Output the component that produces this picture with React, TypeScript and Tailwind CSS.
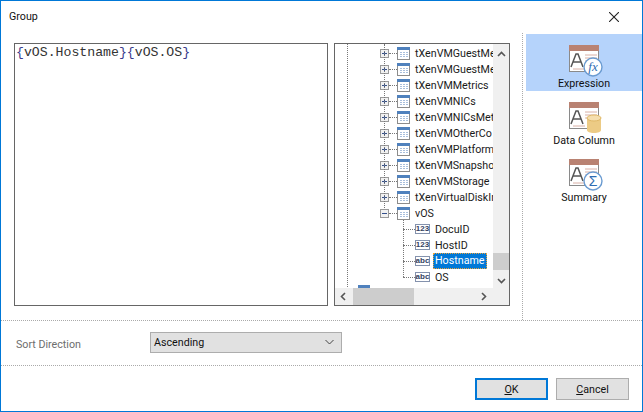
const TABLES = [
  'tXenVMGuestMe',
  'tXenVMGuestMe',
  'tXenVMMetrics',
  'tXenVMNICs',
  'tXenVMNICsMet',
  'tXenVMOtherCo',
  'tXenVMPlatform',
  'tXenVMSnapshot',
  'tXenVMStorage',
  'tXenVirtualDiskIn',
];

const COLUMNS = [
  { name: 'DocuID', kind: '123' },
  { name: 'HostID', kind: '123' },
  { name: 'Hostname', kind: 'abc', selected: true },
  { name: 'OS', kind: 'abc' },
];

function Expander({ open }: { open?: boolean }) {
  return (
    <svg width="9" height="9" viewBox="0 0 9 9" className="shrink-0">
      <rect x="0.5" y="0.5" width="8" height="8" fill="#f1f1f1" stroke="#9a9a9a" />
      <path d="M2 4.5h5" stroke="#33508c" />
      {!open && <path d="M4.5 2v5" stroke="#33508c" />}
    </svg>
  );
}

function TableIcon() {
  return (
    <svg width="13" height="13" viewBox="0 0 13 13" className="shrink-0">
      <rect x="0.5" y="0.5" width="12" height="12" fill="#fff" stroke="#8c8c8c" />
      <rect x="0" y="0" width="13" height="3" fill="#4f81bd" />
      <path d="M3 5h2v1H3zM6 5h2v1H6zM9 5h2v1H9zM3 7h2v1H3zM6 7h2v1H6zM9 7h2v1H9zM3 9h2v1H3zM6 9h2v1H6zM9 9h2v1H9z" fill="#a9bfdc" />
    </svg>
  );
}

function TableRow({ name, open }: { name: string; open?: boolean }) {
  return (
    <div className="flex h-4 items-center pl-[45px]">
      <Expander open={open} />
      <div className="w-[8px] shrink-0 border-t border-dotted border-[#777]" />
      <TableIcon />
      <span className="ml-[5px] pt-[2px] whitespace-nowrap text-[#1a1a1a]">{name}</span>
    </div>
  );
}

function ColumnRow({ name, kind, selected }: { name: string; kind: string; selected?: boolean }) {
  return (
    <div className="flex h-4 items-center pl-[68px]">
      <div className="w-[12px] shrink-0 border-t border-dotted border-[#777]" />
      <span className="flex h-[10px] w-[15px] shrink-0 items-center justify-center border border-[#8492ad] bg-white font-['Liberation_Sans',sans-serif] text-[8px] leading-none font-bold text-[#34425f]">
        {kind}
      </span>
      {selected ? (
        <span className="ml-[3px] flex h-4 items-center border border-dotted border-[#e8a33d] bg-[#0078d7] px-[1px] pt-[1px] text-white">{name}</span>
      ) : (
        <span className="ml-[5px] pt-[2px] text-[#1a1a1a]">{name}</span>
      )}
    </div>
  );
}

function Chevron({ d }: { d: string }) {
  return (
    <svg width="9" height="9" viewBox="0 0 9 9" className="shrink-0">
      <path d={d} fill="none" stroke="#555" strokeWidth="1.6" />
    </svg>
  );
}

function ReportIcon({ children }: { children: React.ReactNode }) {
  return (
    <svg width="34" height="33" viewBox="0 0 34 33" className="shrink-0">
      <rect x="0.5" y="0.5" width="29" height="26" fill="#fff" stroke="#8a8a8a" />
      <rect x="0" y="0" width="30" height="6" fill="#b98272" />
      <path d="M2 22 7 9h2l5 13M4.500 17h7" fill="none" stroke="#555" strokeWidth="1.5" />
      <path d="M16 10h12M16 13h12M16 16h8M4 24h12" stroke="#d8b0a6" />
      {children}
    </svg>
  );
}

function Badge({ children }: { children: React.ReactNode }) {
  return (
    <>
      <circle cx="24" cy="22" r="9" fill="#fff" stroke="#6a9bd1" strokeWidth="1.4" />
      {children}
    </>
  );
}

function PanelItem({ label, active, children }: { label: string; active?: boolean; children: React.ReactNode }) {
  return (
    <div className={`flex h-[57px] flex-col items-center pt-[11px] ${active ? 'bg-[#b5d3fb]' : ''}`}>
      <div className="h-[33px] pl-[4px]">{children}</div>
      <span className="-mt-[1px] leading-[14px] text-[#111]">{label}</span>
    </div>
  );
}

export default function App() {
  return (
    <div className="flex h-[412px] w-[643px] flex-col overflow-hidden border border-[#0078d7] bg-white font-['Roboto',sans-serif] text-[10.7px]">
      {/* Title bar */}
      <div className="flex h-[32px] shrink-0 items-center justify-between pr-[23px] pb-[1px] pl-[8px]">
        <span className="pt-[2px] text-[#111]">Group</span>
        <svg width="10" height="10" viewBox="0 0 10 10">
          <path d="M0 0l10 10M10 0 0 10" stroke="#222" strokeWidth="1.1" />
        </svg>
      </div>

      {/* Main area */}
      <div className="flex h-[288px] shrink-0 border-b border-dotted border-[#aaa]">
        <div className="flex gap-[6px] pt-[10px] pl-[13px]">
          <div className="h-[263px] w-[314px] border border-[#666] px-[1px] py-[2px] font-['Liberation_Mono',monospace] text-[13.2px] leading-[14px] text-[#333]">
            <span className="text-[#3a3a8c]">{'{'}</span>vOS.Hostname<span className="text-[#3a3a8c]">{'}{'}</span>vOS.OS<span className="text-[#3a3a8c]">{'}'}</span>
          </div>

          <div className="relative h-[263px] w-[176px] overflow-hidden border border-[#666]">
            <div className="flex h-[244px]">
              <div className="w-[158px] overflow-hidden pt-[1px]">
                {TABLES.map((t, i) => (
                  <TableRow key={i} name={t} />
                ))}
                <TableRow name="vOS" open />
                {COLUMNS.map((c) => (
                  <ColumnRow key={c.name} {...c} />
                ))}
              </div>
              <div className="flex w-[16px] flex-col items-center bg-[#f0f0f0] pt-[6px]">
                <Chevron d="M1 6l3.500-3.500L8 6" />
                <div className="mt-[194px] h-[17px] w-full bg-[#cdcdcd]" />
                <div className="mt-[6px]">
                  <Chevron d="M1 3l3.500 3.500L8 3" />
                </div>
              </div>
            </div>
            <div className="flex h-[17px] items-center bg-[#f0f0f0] pr-[21px] pl-[4px]">
              <Chevron d="M6 1 2.500 4.500 6 8" />
              <div className="ml-[5px] h-full w-[61px] bg-[#cdcdcd]" />
              <div className="ml-auto">
                <Chevron d="M3 1l3.500 3.500L3 8" />
              </div>
            </div>
            {/* tree guide lines */}
            <div className="absolute top-0 left-[12px] h-[243px] border-l border-dotted border-[#777]" />
            <div className="absolute top-0 left-[49px] h-[164px] border-l border-dotted border-[#777]" />
            <div className="absolute top-[176px] left-[68px] h-[57px] border-l border-dotted border-[#777]" />
            <div className="absolute top-[241px] left-[23px] h-[3px] w-[12px] bg-[#4f81bd]" />
          </div>
        </div>

        {/* Group type picker */}
        <div className="ml-[12px] flex flex-1 flex-col border-l border-dotted border-[#aaa] pt-[1px] pl-[3px]">
          <PanelItem label="Expression" active>
            <ReportIcon>
              <Badge>
                <text x="24" y="26" textAnchor="middle" fontFamily="Liberation Serif, serif" fontStyle="italic" fontSize="13" fill="#2f6db3">fx</text>
              </Badge>
            </ReportIcon>
          </PanelItem>
          <PanelItem label="Data Column">
            <ReportIcon>
              <path d="M18 16v12c0 2 3 3 7 3s7-1 7-3V16z" fill="#eccb85" />
              <ellipse cx="25" cy="16" rx="7" ry="3" fill="#f5deae" stroke="#e0b968" />
            </ReportIcon>
          </PanelItem>
          <PanelItem label="Summary">
            <ReportIcon>
              <Badge>
                <text x="24" y="27" textAnchor="middle" fontFamily="Liberation Sans, sans-serif" fontSize="14" fill="#2f6db3">Σ</text>
              </Badge>
            </ReportIcon>
          </PanelItem>
        </div>
      </div>

      {/* Sort direction */}
      <div className="flex h-[45px] shrink-0 items-center border-b border-dotted border-[#aaa] pb-[2px] pl-[15px]">
        <span className="w-[134px] pt-[7px] text-[#6d6d6d]">Sort Direction</span>
        <div className="flex h-[21px] w-[192px] items-center justify-between border border-[#adadad] bg-[#e1e1e1] pr-[7px] pl-[3px] text-[#111]">
          <span className="pt-[3px]">Ascending</span>
          <svg width="9" height="6" viewBox="0 0 9 6">
            <path d="M0.500 1 4.500 5l4-4" fill="none" stroke="#444" />
          </svg>
        </div>
      </div>

      {/* Buttons */}
      <div className="flex flex-1 items-start justify-end gap-[8px] pt-[12px] pr-[13px]">
        <button className="h-[22px] w-[73px] border-2 border-[#0078d7] bg-[#e1e1e1] pt-[2px] leading-none text-[#111]">
          <span className="underline">O</span>K
        </button>
        <button className="h-[22px] w-[73px] border border-[#adadad] bg-[#e1e1e1] pt-[2px] leading-none text-[#111]">
          <span className="underline">C</span>ancel
        </button>
      </div>
    </div>
  );
}
